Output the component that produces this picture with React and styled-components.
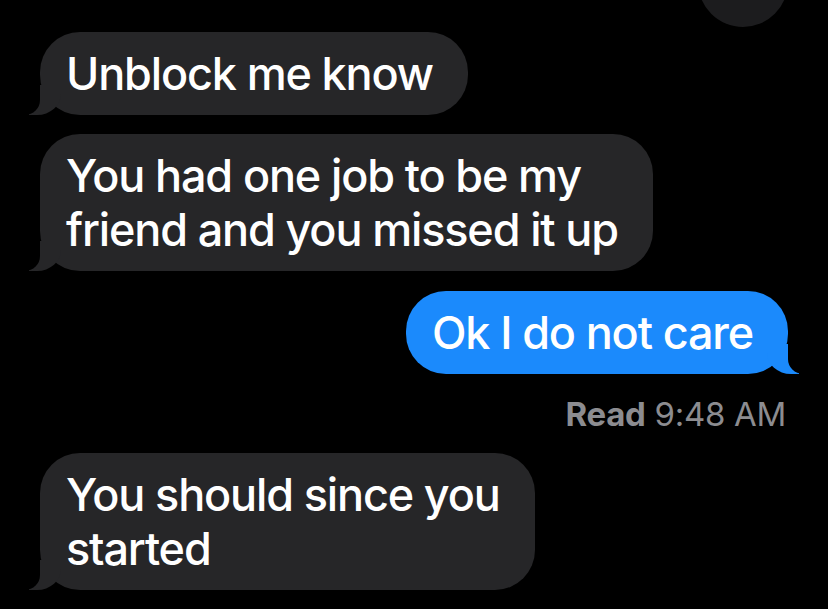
import React from "react";
import styled, { createGlobalStyle, css } from "styled-components";

const Global = createGlobalStyle`
  html, body { margin: 0; padding: 0; background: #000; }
  body { font-family: Inter, "Noto Sans", "Liberation Sans", sans-serif; -webkit-font-smoothing: antialiased; }
`;

const Page = styled.div`
  width: 828px;
  height: 609px;
  background: #000;
  overflow: hidden;
  display: flex;
  flex-direction: column;
  padding: 0 40px 0 40px;
  box-sizing: border-box;
`;

const TopRow = styled.div`
  height: 27px;
  display: flex;
  justify-content: flex-end;
`;

const Avatar = styled.div`
  width: 90px;
  height: 90px;
  margin-top: -63px;
  border-radius: 50%;
  background: #1c1c1e;
`;

const Row = styled.div`
  display: flex;
  justify-content: ${(p) => (p.$me ? "flex-end" : "flex-start")};
  margin-top: ${(p) => p.$gap}px;
`;

const Bubble = styled.div`
  position: relative;
  width: fit-content;
  box-sizing: border-box;
  padding: 15px 35px 14px 26px;
  border-radius: 40px;
  font-size: 45px;
  line-height: 54px;
  font-weight: 500;
  letter-spacing: -1.15px;
  color: #fff;
  background: ${(p) => (p.$me ? "#1b8afc" : "#262628")};

  &::before,
  &::after {
    content: "";
    position: absolute;
    bottom: 0;
    height: 30px;
  }

  ${(p) =>
    p.$me
      ? css`
          &::before {
            right: -11px;
            width: 32px;
            background: #1b8afc;
            border-bottom-left-radius: 24px 21px;
          }
          &::after {
            right: -40px;
            width: 40px;
            background: #000;
            border-bottom-left-radius: 15px;
          }
        `
      : css`
          &::before {
            left: -11px;
            width: 32px;
            background: #262628;
            border-bottom-right-radius: 24px 21px;
          }
          &::after {
            left: -40px;
            width: 40px;
            background: #000;
            border-bottom-right-radius: 15px;
          }
        `}
`;

const Receipt = styled.div`
  margin-top: 21px;
  align-self: flex-end;
  margin-right: 2px;
  font-size: 33px;
  line-height: 38px;
  color: #8c8c90;
  letter-spacing: -0.3px;
  font-weight: 400;

  b {
    font-weight: 700;
  }
`;

export default function App() {
  return (
    <>
      <Global />
      <Page>
        <TopRow>
          <Avatar />
        </TopRow>
        <Row $gap={5}>
          <Bubble>Unblock me know</Bubble>
        </Row>
        <Row $gap={19}>
          <Bubble>
            You had one job to be my
            <br />
            friend and you missed it up
          </Bubble>
        </Row>
        <Row $me $gap={20}>
          <Bubble $me>Ok I do not care</Bubble>
        </Row>
        <Receipt>
          <b>Read</b> 9:48 AM
        </Receipt>
        <Row $gap={20}>
          <Bubble>
            You should since you
            <br />
            started
          </Bubble>
        </Row>
      </Page>
    </>
  );
}
